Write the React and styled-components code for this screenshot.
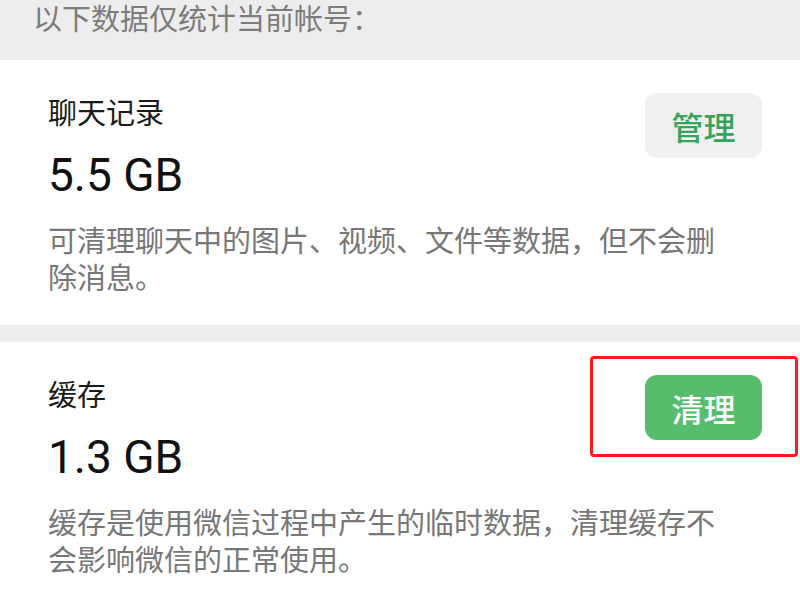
import React from "react";
import styled, { createGlobalStyle } from "styled-components";

const GlobalStyle = createGlobalStyle`
  html, body {
    margin: 0;
    padding: 0;
    background: #ededed;
  }
  body {
    width: 800px;
    height: 600px;
    overflow: hidden;
    font-family: "Noto Sans CJK SC", "Noto Sans", sans-serif;
  }
`;

const storage = [
  {
    title: "聊天记录",
    size: "5.5 GB",
    action: "管理",
    primary: false,
    desc: "可清理聊天中的图片、视频、文件等数据，但不会删除消息。",
  },
  {
    title: "缓存",
    size: "1.3 GB",
    action: "清理",
    primary: true,
    marked: true,
    desc: "缓存是使用微信过程中产生的临时数据，清理缓存不会影响微信的正常使用。",
  },
];

class App extends React.Component {
  render() {
    return (
      <Page>
        <GlobalStyle />
        <Header>以下数据仅统计当前帐号：</Header>
        <List>
          {storage.map((item) => (
            <Card key={item.title}>
              <Title>{item.title}</Title>
              <Size>{item.size}</Size>
              <Button primary={item.primary}>{item.action}</Button>
              <Desc>{item.desc}</Desc>
              {item.marked && <Mark />}
            </Card>
          ))}
        </List>
      </Page>
    );
  }
}

const Page = styled.div`
  width: 800px;
  height: 600px;
  background: #ededed;
  display: flex;
  flex-direction: column;
  overflow: hidden;
`;

const Header = styled.div`
  flex-shrink: 0;
  height: 60px;
  padding: 0 0 0 33px;
  box-sizing: border-box;
  font-size: 29px;
  line-height: 34px;
  color: #7c7c7c;
`;

const List = styled.div`
  flex-shrink: 0;
  display: flex;
  flex-direction: column;
  gap: 17px;
`;

const Card = styled.div`
  position: relative;
  background: #fff;
  display: grid;
  grid-template-columns: 1fr 117px;
  grid-template-rows: auto auto auto;
  align-items: start;
  padding: 31px 38px 30px 48px;
`;

const Title = styled.div`
  grid-column: 1;
  grid-row: 1;
  font-size: 29px;
  line-height: 40px;
  color: #1a1a1a;
`;

const Size = styled.div`
  grid-column: 1;
  grid-row: 2;
  margin-top: 16px;
  font-family: Roboto, "Liberation Sans", sans-serif;
  font-size: 46px;
  line-height: 56px;
  color: #111;
`;

const Desc = styled.div`
  grid-column: 1 / -1;
  grid-row: 3;
  margin-top: 18px;
  max-width: 680px;
  font-size: 29px;
  line-height: 37px;
  color: #777;
`;

const Button = styled.button`
  grid-column: 2;
  grid-row: 1 / 3;
  margin-top: 2px;
  width: 117px;
  height: 65px;
  border: none;
  border-radius: 12px;
  font-family: "Noto Sans CJK SC", sans-serif;
  font-size: 32px;
  font-weight: 500;
  background: ${(p) => (p.primary ? "#57bd6c" : "#f0f0f0")};
  color: ${(p) => (p.primary ? "#fff" : "#38a35c")};
  cursor: pointer;
`;

const Mark = styled.div`
  position: absolute;
  top: 14px;
  left: 590px;
  width: 208px;
  height: 101px;
  box-sizing: border-box;
  border: 3px solid #ff1a1a;
  border-radius: 4px;
  pointer-events: none;
`;

export default App;
